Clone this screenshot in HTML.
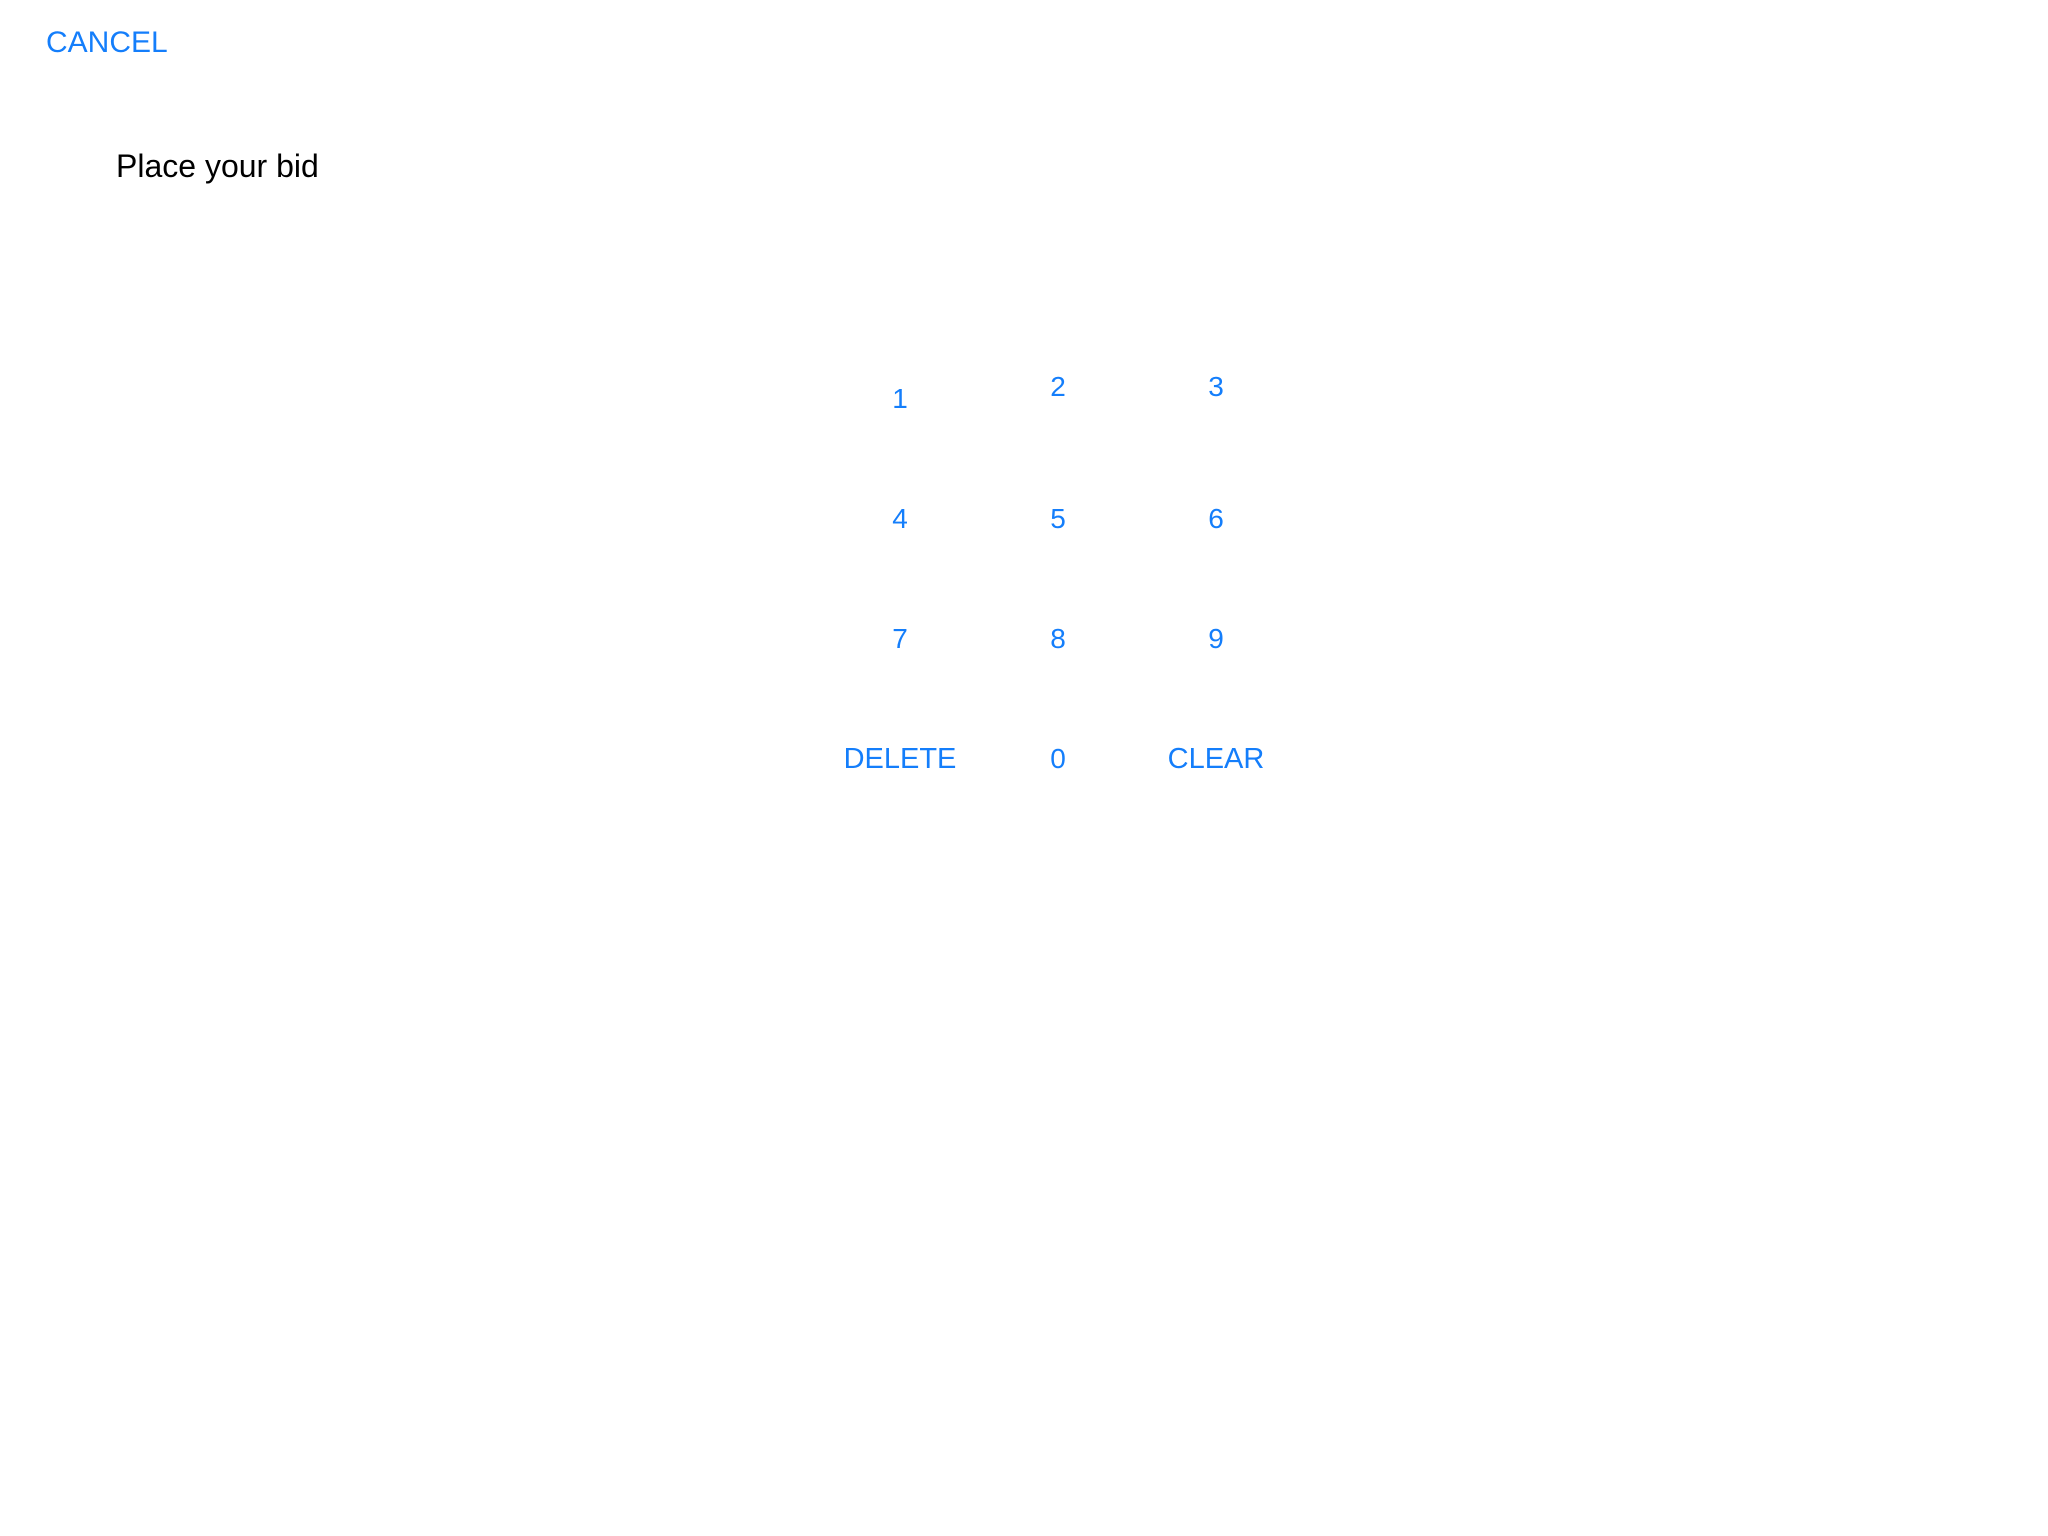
<!DOCTYPE html>
<html><head><meta charset="utf-8"><style>
html,body{margin:0;padding:0;background:#fff;width:2048px;height:1536px;overflow:hidden;font-family:"Liberation Sans",Arial,sans-serif}
.t{position:absolute;white-space:nowrap;line-height:1}
.b{color:#147efb;font-size:28px;width:200px;text-align:center}
.w{font-size:29px}
</style></head><body>
<div class="t" style="left:46px;top:28px;font-size:30px;color:#147efb">CANCEL</div>
<div class="t" style="left:116px;top:150px;font-size:32px;color:#000">Place your bid</div>
<div class="t b" style="left:800px;top:385px">1</div>
<div class="t b" style="left:958px;top:373px">2</div>
<div class="t b" style="left:1116px;top:373px">3</div>
<div class="t b" style="left:800px;top:505px">4</div>
<div class="t b" style="left:958px;top:505px">5</div>
<div class="t b" style="left:1116px;top:505px">6</div>
<div class="t b" style="left:800px;top:625px">7</div>
<div class="t b" style="left:958px;top:625px">8</div>
<div class="t b" style="left:1116px;top:625px">9</div>
<div class="t b w" style="left:800px;top:745px">DELETE</div>
<div class="t b" style="left:958px;top:745px">0</div>
<div class="t b w" style="left:1116px;top:745px">CLEAR</div>
</body></html>
